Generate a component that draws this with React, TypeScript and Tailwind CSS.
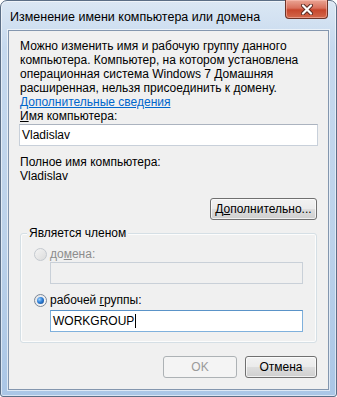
const font = { fontFamily: '"Liberation Sans", Arial, sans-serif' };

const Radio = ({ checked, disabled }: { checked?: boolean; disabled?: boolean }) => (
  <span
    className={
      'flex h-[13px] w-[13px] shrink-0 items-center justify-center rounded-full border ' +
      (disabled
        ? 'border-[#c4c9cf] bg-gradient-to-br from-[#f4f4f4] to-[#dcdcdc]'
        : 'border-[#7b8797] bg-gradient-to-br from-[#e2e4e8] to-[#fafafa]')
    }
  >
    {checked && (
      <span className="h-[7px] w-[7px] rounded-full bg-[radial-gradient(circle_at_35%_35%,#9fd3ff_0%,#2f80d8_45%,#12407f_100%)]" />
    )}
  </span>
);

const Button = ({ children, disabled, className = '' }: { children: React.ReactNode; disabled?: boolean; className?: string }) => (
  <div
    className={
      'flex h-[22px] items-center justify-center rounded-[3px] border text-[12px] ' +
      (disabled
        ? 'border-[#adb2b5] bg-[#f4f4f4] text-[#9a9a9a]'
        : 'border-[#707070] bg-[linear-gradient(to_bottom,#f2f2f2_0%,#ebebeb_48%,#dddddd_52%,#cfcfcf_100%)] text-black shadow-[inset_0_0_0_1px_rgba(255,255,255,0.7)]') +
      ' ' +
      className
    }
  >
    {children}
  </div>
);

export default function App() {
  return (
    <div className="h-[397px] w-[337px] bg-white" style={font}>
      <div className="flex h-[397px] w-[337px] flex-col rounded-t-[7px] rounded-b-[3px] border border-[#5b6e86] bg-[linear-gradient(to_bottom,#dbe7f4_0%,#c6d9ee_12%,#bcd2ea_60%,#aac6e6_100%)] px-[7px] pb-[6px] shadow-[inset_0_0_0_1px_rgba(255,255,255,0.55)]">
        <div className="relative flex h-[29px] shrink-0 items-center pl-[2px] pt-[3px]">
          <span className="text-[12.5px] text-black">Изменение имени компьютера или домена</span>
          <div className="absolute right-[1px] -top-[1px] flex h-[19px] w-[43px] items-center justify-center rounded-b-[4px] border border-t-0 border-[#6d3428] bg-[linear-gradient(to_bottom,#eaa594_0%,#d9705c_45%,#c7462c_55%,#d2684b_100%)] shadow-[inset_0_0_0_1px_rgba(255,200,190,0.5)]">
            <svg width="12" height="11" viewBox="0 0 12 11">
              <path d="M2 1.5 L10 9.5 M10 1.5 L2 9.5" stroke="#5a2a22" strokeWidth="4" strokeLinecap="round" />
              <path d="M2 1.5 L10 9.5 M10 1.5 L2 9.5" stroke="#ffffff" strokeWidth="2.2" strokeLinecap="round" />
            </svg>
          </div>
        </div>

        <div className="flex flex-1 flex-col border border-[#8396ae] bg-[#f0f0f0] px-[11px] pt-[8px] text-[12px] leading-[14px] text-black shadow-[0_0_0_1px_rgba(255,255,255,0.6)]">
          <p>
            Можно изменить имя и рабочую группу данного компьютера. Компьютер, на котором установлена
            операционная система Windows 7 Домашняя расширенная, нельзя присоединить к домену.
          </p>
          <span className="text-[#0066cc] underline">Дополнительные сведения</span>
          <span>
            <span className="underline">И</span>мя компьютера:
          </span>
          <div className="-mx-[1px] mt-[1px] flex h-[22px] items-center border border-[#c8d0da] border-t-[#abb3bf] bg-white px-[2px]">
            Vladislav
          </div>
          <span className="mt-[9px]">Полное имя компьютера:</span>
          <span>Vladislav</span>
          <div className="mt-[15px] flex justify-end">
            <Button className="w-[107px]">
              Д<span className="underline">о</span>полнительно...
            </Button>
          </div>

          <div className="relative mt-[13px] flex flex-col rounded-[3px] border border-[#d5dfe5] px-[13px] pt-[13px] pb-[10px] shadow-[inset_0_0_0_1px_rgba(255,255,255,0.8)]">
            <span className="absolute -top-[8px] left-[6px] bg-[#f0f0f0] px-[2px]">Является членом</span>
            <div className="flex items-center gap-[3px]">
              <Radio disabled />
              <span className="text-[#8d8d8d]">
                до<span className="underline">м</span>ена:
              </span>
            </div>
            <div className="ml-[16px] mt-[1px] h-[22px] border border-[#c9d0d8] bg-[#f0f0f0]" />
            <div className="mt-[9px] flex items-center gap-[3px]">
              <Radio checked />
              <span>
                рабочей <span className="underline">г</span>руппы:
              </span>
            </div>
            <div className="ml-[16px] mt-[3px] flex h-[22px] items-center border border-[#7fb0dc] border-t-[#5a93c8] bg-white px-[2px]">
              WORKGROUP
              <span className="ml-[1px] h-[14px] w-[1px] bg-black" />
            </div>
          </div>

          <div className="mt-[13px] flex justify-end gap-[8px]">
            <Button disabled className="w-[74px]">OK</Button>
            <Button className="w-[72px]">Отмена</Button>
          </div>
        </div>
      </div>
    </div>
  );
}
